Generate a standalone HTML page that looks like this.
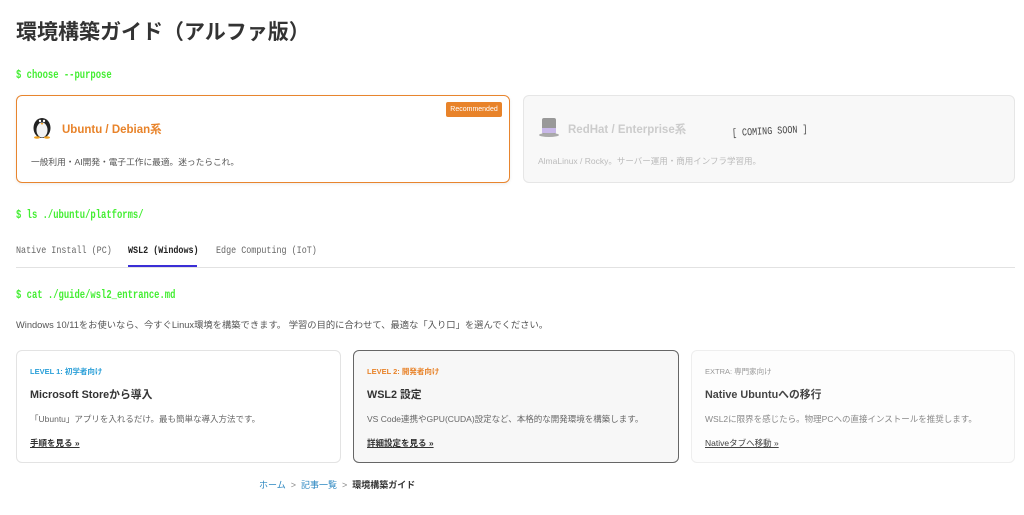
<!DOCTYPE html>
<html><head><meta charset="utf-8"><style>
*{margin:0;padding:0;box-sizing:border-box}
body{width:1024px;height:515px;background:#fff;position:relative;overflow:hidden;font-family:"Liberation Sans","Noto Sans CJK JP",sans-serif;color:#333}
.a{position:absolute;white-space:nowrap}
.mono{font-family:"Liberation Mono","Noto Sans CJK JP",monospace;transform-origin:0 50%}
.g{color:#44ee33;font-size:11.5px;font-weight:bold;transform:scaleX(0.77)}
.card{position:absolute;border-radius:6px}
.lv{font-size:7.5px;font-weight:bold}
.t{font-size:10.8px;font-weight:bold;color:#333}
.d{font-size:8.5px;color:#666}
.l{font-size:8.5px;font-weight:bold;text-decoration:underline;color:#333}
.tab{font-size:10.5px;transform:scaleX(0.8)}
</style></head><body>
<div class="a" style="left:16px;top:16px;font-size:21px;font-weight:bold;color:#333">環境構築ガイド（アルファ版）</div>
<div class="a mono g" style="left:16px;top:69px">$ choose --purpose</div>

<div class="card" style="left:16px;top:95px;width:494px;height:88px;border:1.5px solid #e8852e;box-shadow:0 1px 3px rgba(0,0,0,.08)">
  <div class="a" style="left:429px;top:6px;width:56px;height:15px;background:#e8832a;color:#fff;font-size:7px;border-radius:2px;text-align:center;line-height:15px">Recommended</div>
  <svg class="a" style="left:14px;top:19px" width="22" height="24" viewBox="0 0 22 24"><ellipse cx="11" cy="13" rx="8.5" ry="10" fill="#222"/><ellipse cx="11" cy="15" rx="5.5" ry="7.5" fill="#f2f2f2"/><circle cx="9" cy="6" r="1.2" fill="#fff"/><circle cx="13" cy="6" r="1.2" fill="#fff"/><path d="M9.5 8 L12.5 8 L11 10Z" fill="#f0a020"/><ellipse cx="6" cy="22.5" rx="3" ry="1.3" fill="#f0a020"/><ellipse cx="16" cy="22.5" rx="3" ry="1.3" fill="#f0a020"/></svg>
  <div class="a" style="left:45px;top:25px;font-size:11.5px;font-weight:bold;color:#e8832a">Ubuntu / Debian系</div>
  <div class="a" style="left:14px;top:59px;font-size:8.7px;color:#555">一般利用・AI開発・電子工作に最適。迷ったらこれ。</div>
</div>

<div class="card" style="left:523px;top:95px;width:492px;height:88px;border:1px solid #e6e6e6;background:#f8f8f8">
  <svg class="a" style="left:14px;top:20px" width="22" height="22" viewBox="0 0 22 22"><rect x="4" y="2" width="14" height="16" rx="2" fill="#999"/><rect x="4" y="12" width="14" height="5" fill="#c8b8e8"/><ellipse cx="11" cy="19" rx="10" ry="2" fill="#aaa"/></svg>
  <div class="a" style="left:44px;top:25px;font-size:11.5px;font-weight:bold;color:#ccc">RedHat / Enterprise系</div>
  <div class="a" style="left:14px;top:59px;font-size:8.5px;color:#bbb">AlmaLinux / Rocky。サーバー運用・商用インフラ学習用。</div>
  <div class="a mono" style="left:208px;top:32px;font-size:10.5px;color:#444;transform:rotate(-3deg) scaleX(0.8)">[ COMING SOON ]</div>
</div>

<div class="a mono g" style="left:16px;top:209px">$ ls ./ubuntu/platforms/</div>
<div class="a mono tab" style="left:16px;top:245px;color:#666">Native Install (PC)</div>
<div class="a mono tab" style="left:128px;top:245px;color:#222;font-weight:bold">WSL2 (Windows)</div>
<div class="a mono tab" style="left:216px;top:245px;color:#666">Edge Computing (IoT)</div>
<div class="a" style="left:16px;top:267px;width:999px;height:1px;background:#e2e2e2"></div>
<div class="a" style="left:128px;top:265px;width:69px;height:2px;background:#3a2ed6"></div>

<div class="a mono g" style="left:16px;top:289px">$ cat ./guide/wsl2_entrance.md</div>
<div class="a" style="left:16px;top:317px;font-size:9.3px;color:#555">Windows 10/11をお使いなら、今すぐLinux環境を構築できます。 学習の目的に合わせて、最適な「入り口」を選んでください。</div>

<div class="card" style="left:16px;top:350px;width:325px;height:113px;border:1px solid #e3e3e3">
  <div class="a lv" style="left:13px;top:15px;color:#2a9fd8">LEVEL 1: 初学者向け</div>
  <div class="a t" style="left:13px;top:35px">Microsoft Storeから導入</div>
  <div class="a d" style="left:13px;top:62px">「Ubuntu」アプリを入れるだけ。最も簡単な導入方法です。</div>
  <div class="a l" style="left:13px;top:86px">手順を見る »</div>
</div>
<div class="card" style="left:353px;top:350px;width:326px;height:113px;border:1px solid #666;background:#f7f7f7">
  <div class="a lv" style="left:13px;top:15px;color:#e8832a">LEVEL 2: 開発者向け</div>
  <div class="a t" style="left:13px;top:35px">WSL2 設定</div>
  <div class="a d" style="left:13px;top:62px">VS Code連携やGPU(CUDA)設定など、本格的な開発環境を構築します。</div>
  <div class="a l" style="left:13px;top:86px">詳細設定を見る »</div>
</div>
<div class="card" style="left:691px;top:350px;width:324px;height:113px;border:1px solid #eee;background:#fdfdfd">
  <div class="a lv" style="left:13px;top:15px;color:#999;font-weight:normal">EXTRA: 専門家向け</div>
  <div class="a t" style="left:13px;top:35px;color:#444">Native Ubuntuへの移行</div>
  <div class="a d" style="left:13px;top:62px;color:#888">WSL2に限界を感じたら。物理PCへの直接インストールを推奨します。</div>
  <div class="a" style="left:13px;top:86px;font-size:8.5px;text-decoration:underline;color:#444">Nativeタブへ移動 »</div>
</div>

<div class="a" style="left:259px;top:478px;font-size:9px;color:#888"><span style="color:#2a86c0">ホーム</span> &nbsp;&gt;&nbsp; <span style="color:#2a86c0">記事一覧</span> &nbsp;&gt;&nbsp; <span style="color:#333;font-weight:bold">環境構築ガイド</span></div>
</body></html>
